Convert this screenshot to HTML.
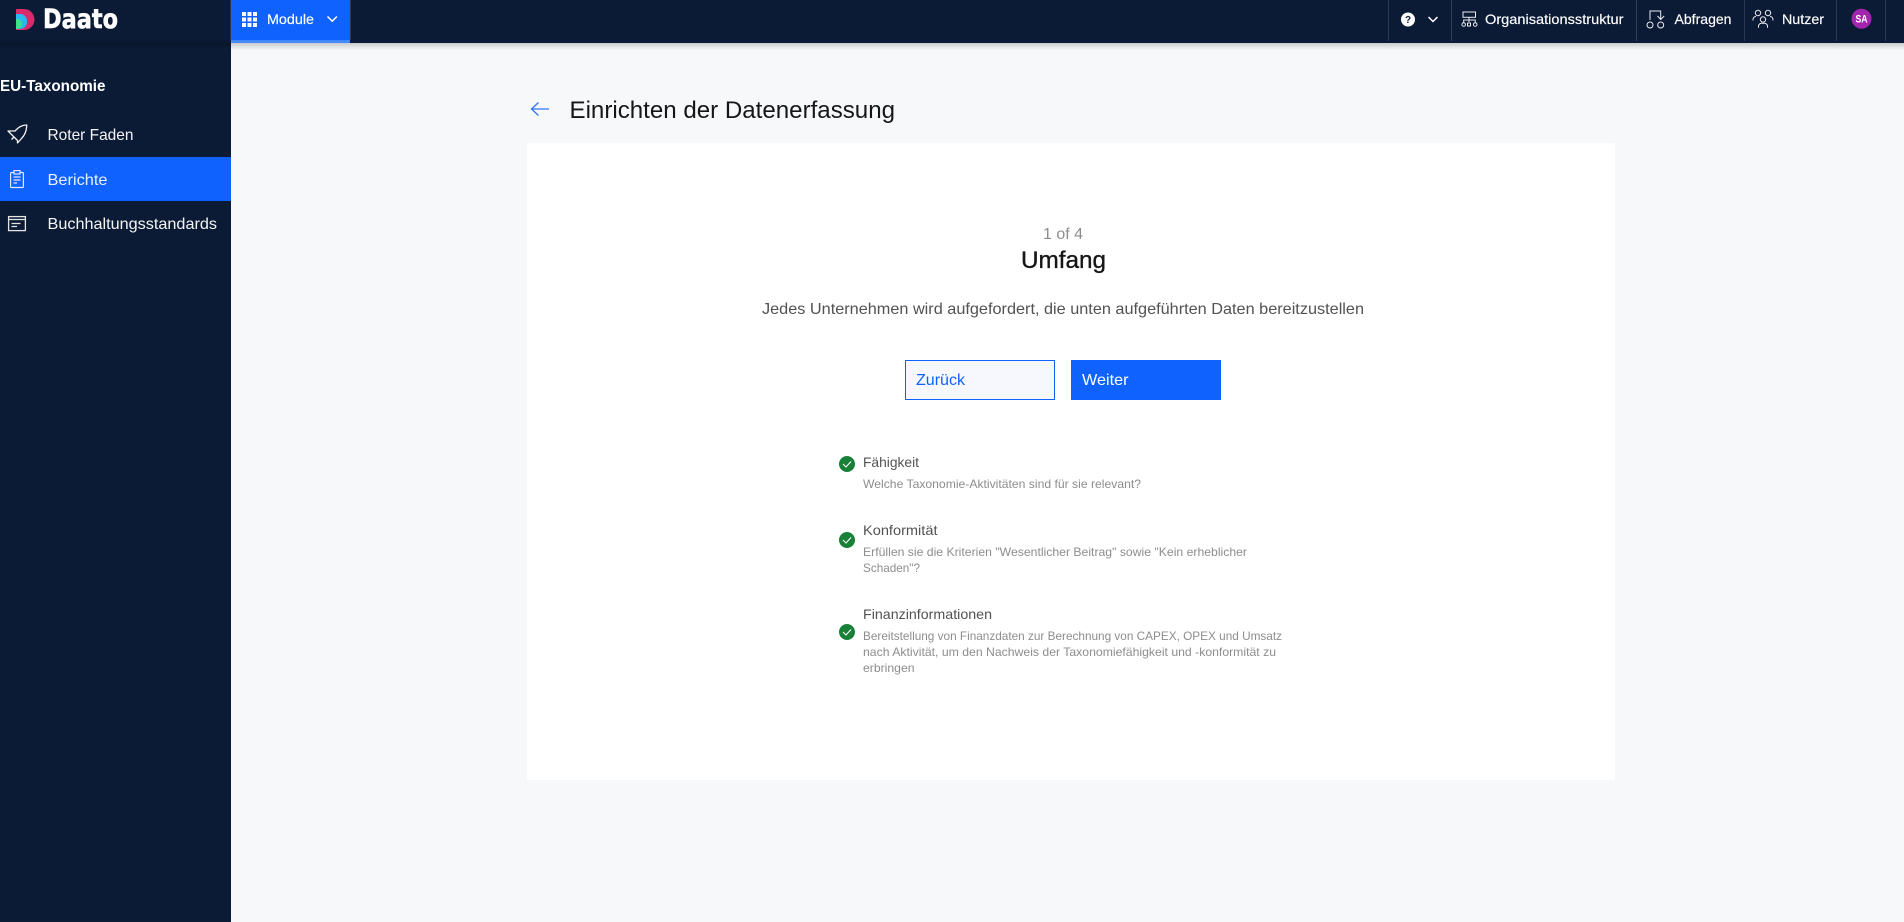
<!DOCTYPE html>
<html lang="de">
<head>
<meta charset="utf-8">
<title>Einrichten der Datenerfassung</title>
<style>
html,body{margin:0;padding:0;width:1904px;height:922px;overflow:hidden;background:#f7f8fa;font-family:"Liberation Sans",sans-serif}
.b{position:absolute}
svg{position:absolute;left:0;top:0}
text{font-family:"Liberation Sans",sans-serif;white-space:pre}
.ic{fill:none;stroke:#e8eaee;stroke-width:1}
.sep{width:1px;top:0;height:41px;background:#2a3950}
</style>
</head>
<body>
<div class="b" style="left:0;top:0;width:231px;height:922px;background:#0b1b35"></div>
<div class="b" style="left:231px;top:43px;width:1673px;height:7px;background:linear-gradient(#c9cacc,#f7f8fa)"></div>
<div class="b" style="left:0;top:43px;width:231px;height:5px;background:linear-gradient(#081428,#0b1b35)"></div>
<div class="b" style="left:0;top:0;width:1904px;height:43px;background:#0b1b35"></div>
<div class="b" style="left:0;top:40px;width:230px;height:3px;background:#0a1830"></div>
<div class="b" style="left:231px;top:0;width:119px;height:40px;background:#0f62fe"></div>
<div class="b" style="left:231px;top:40px;width:119px;height:3px;background:#4589ff"></div>
<div class="b" style="left:230px;top:0;width:1px;height:40px;background:#2a3950"></div>
<div class="b" style="left:350px;top:0;width:1px;height:40px;background:#2a3950"></div>
<div class="b sep" style="left:1388px"></div>
<div class="b sep" style="left:1451px;background:#34435a"></div>
<div class="b sep" style="left:1636px;background:#34435a"></div>
<div class="b sep" style="left:1744px"></div>
<div class="b sep" style="left:1836px"></div>
<div class="b sep" style="left:1885px"></div>
<div class="b" style="left:0;top:157px;width:231px;height:44px;background:#0f62fe"></div>
<div class="b" style="left:527px;top:143px;width:1088px;height:637px;background:#fff"></div>
<div class="b" style="left:905px;top:360px;width:148px;height:38px;background:#f6f8fd;border:1px solid #0f62fe"></div>
<div class="b" style="left:1071px;top:360px;width:150px;height:40px;background:#0f62fe"></div>

<svg width="1904" height="922" viewBox="0 0 1904 922" xmlns="http://www.w3.org/2000/svg">
  <!-- logo -->
  <path d="M16 9h8a10.500 10.500 0 0 1 0 21h-8z" fill="#d92a6b"/>
  <path d="M16 14h4a7 7 0 0 1 7 7v1a7 7 0 0 1-7 7h-4z" fill="#2ab8f5"/>
  <path d="M16 19h1a5 5.500 0 0 1 5 5.500a5 5 0 0 1-5 4.500h-1z" fill="#3ee08a"/>
  <text x="43" y="28" font-size="27" font-weight="700" fill="#fff" stroke="#fff" stroke-width=".6" textLength="75" lengthAdjust="spacingAndGlyphs" style="font-family:'DejaVu Sans',sans-serif">Daato</text>

  <!-- module -->
  <g fill="#fff">
    <rect x="242" y="12" width="4" height="4"/><rect x="247.500" y="12" width="4" height="4"/><rect x="253" y="12" width="4" height="4"/>
    <rect x="242" y="17.500" width="4" height="4"/><rect x="247.500" y="17.500" width="4" height="4"/><rect x="253" y="17.500" width="4" height="4"/>
    <rect x="242" y="23" width="4" height="4"/><rect x="247.500" y="23" width="4" height="4"/><rect x="253" y="23" width="4" height="4"/>
  </g>
  <text x="267" y="24" font-size="14" fill="#fff" stroke="#fff" stroke-width=".15" textLength="47" lengthAdjust="spacingAndGlyphs">Module</text>
  <path d="M327.500 16.500l4.700 4.700 4.700-4.700" fill="none" stroke="#fff" stroke-width="1.500"/>

  <!-- right header -->
  <circle cx="1408" cy="19.500" r="7" fill="#fff"/>
  <text x="1408" y="23" font-size="10" font-weight="700" fill="#0b1b35" text-anchor="middle">?</text>
  <path d="M1428.500 17l4.500 4.500 4.500-4.500" fill="none" stroke="#fff" stroke-width="1.500"/>
  <g class="ic">
    <rect x="1463" y="12" width="12.500" height="5.300"/>
    <path d="M1469 17.300v4.700M1463.700 22.500v-2.500h11.500v2.500"/>
    <circle cx="1463.700" cy="24.500" r="1.800"/><rect x="1467.500" y="23" width="3" height="3"/><circle cx="1475.200" cy="24.500" r="1.800"/>
  </g>
  <text x="1485" y="24" font-size="14" fill="#fff" stroke="#fff" stroke-width=".15" textLength="138.500" lengthAdjust="spacingAndGlyphs">Organisationsstruktur</text>
  <g class="ic">
    <path d="M1650 20v-9h10.700v8.700M1657.500 16l3.200 3.500 3.500-3.500"/>
    <circle cx="1650" cy="25" r="3"/><circle cx="1660.700" cy="25" r="3"/>
  </g>
  <text x="1674.500" y="24" font-size="14" fill="#fff" stroke="#fff" stroke-width=".15" textLength="57" lengthAdjust="spacingAndGlyphs">Abfragen</text>
  <g class="ic">
    <circle cx="1758" cy="13" r="2.700"/><circle cx="1768" cy="13" r="2.700"/><circle cx="1763" cy="19.500" r="2.700"/>
    <path d="M1753 20.500v-1a3 3 0 0 1 3-3M1773 20.500v-1a3 3 0 0 0-3-3M1758.500 27.700v-1.500a3 3 0 0 1 3-2.900h3a3 3 0 0 1 3 2.900v1.500"/>
  </g>
  <text x="1782" y="24" font-size="14" fill="#fff" stroke="#fff" stroke-width=".15" textLength="42" lengthAdjust="spacingAndGlyphs">Nutzer</text>
  <circle cx="1861.500" cy="18.700" r="10" fill="#a126ad"/>
  <text x="1855.500" y="22.700" font-size="11" font-weight="700" fill="#fff" textLength="12" lengthAdjust="spacingAndGlyphs">SA</text>

  <!-- sidebar -->
  <text x="0" y="91" font-size="16" font-weight="700" fill="#fff" textLength="105.500" lengthAdjust="spacingAndGlyphs">EU-Taxonomie</text>
  <g class="ic" stroke-linejoin="round" style="stroke:#f4f4f4;stroke-width:1.300">
    <path d="M26.700 125C22 125 19 127 16.500 129.500L15 131H8L13 136L17.500 140.500V143L21.500 138.500C25 135 26.700 130 26.700 125z"/>
    <path d="M11.500 139.500l2.500-2.500"/>
  </g>
  <text x="47.500" y="140" font-size="16" fill="#f4f4f4" textLength="86" lengthAdjust="spacingAndGlyphs">Roter Faden</text>
  <g class="ic" style="stroke:#dfe8ff;stroke-width:1.200">
    <rect x="10.600" y="172.500" width="12.800" height="15" rx="1"/>
    <rect x="14" y="170.600" width="6" height="3.400" fill="#0f62fe"/>
    <path d="M13.500 177h7M13.500 180h7M13.500 183h3.500"/>
  </g>
  <text x="47.500" y="185" font-size="16" fill="#e8efff" textLength="60" lengthAdjust="spacingAndGlyphs">Berichte</text>
  <g class="ic" style="stroke:#e4e4e4;stroke-width:1.300">
    <rect x="8.600" y="216.600" width="16.800" height="14"/>
    <path d="M8.600 219.500h16.800M11.500 223.500h9M11.500 226.500h5.500"/>
  </g>
  <text x="47.500" y="229" font-size="16" fill="#f4f4f4" textLength="169.500" lengthAdjust="spacingAndGlyphs">Buchhaltungsstandards</text>

  <!-- title -->
  <path d="M549 109h-17.500M538.500 102.500l-7 6.500 7 6.500" fill="none" stroke="#2f74fe" stroke-width="1.300"/>
  <text x="569.500" y="118" font-size="24" fill="#161616" textLength="325.500" lengthAdjust="spacingAndGlyphs">Einrichten der Datenerfassung</text>

  <!-- intro -->
  <text x="1043" y="239" font-size="16" fill="#8d8d8d" textLength="40" lengthAdjust="spacingAndGlyphs">1 of 4</text>
  <text x="1021" y="268" font-size="24" fill="#161616" stroke="#161616" stroke-width=".35" textLength="85" lengthAdjust="spacingAndGlyphs">Umfang</text>
  <text x="762" y="314" font-size="16" fill="#525252" textLength="602" lengthAdjust="spacingAndGlyphs">Jedes Unternehmen wird aufgefordert, die unten aufgeführten Daten bereitzustellen</text>
  <text x="916" y="385" font-size="16" fill="#0f62fe" textLength="49" lengthAdjust="spacingAndGlyphs">Zurück</text>
  <text x="1082" y="385" font-size="16" fill="#fff" textLength="46.500" lengthAdjust="spacingAndGlyphs">Weiter</text>

  <!-- list -->
  <g>
    <circle cx="847" cy="464" r="8" fill="#198038"/><path d="M843 464l3 3 5-5.500" fill="none" stroke="#fff" stroke-width="1.100"/>
    <circle cx="847" cy="540" r="8" fill="#198038"/><path d="M843 540l3 3 5-5.500" fill="none" stroke="#fff" stroke-width="1.100"/>
    <circle cx="847" cy="632" r="8" fill="#198038"/><path d="M843 632l3 3 5-5.500" fill="none" stroke="#fff" stroke-width="1.100"/>
  </g>
  <text x="863" y="467" font-size="14" fill="#525252" textLength="56" lengthAdjust="spacingAndGlyphs">Fähigkeit</text>
  <text x="863" y="488" font-size="12" fill="#8d8d8d" textLength="278" lengthAdjust="spacingAndGlyphs">Welche Taxonomie-Aktivitäten sind für sie relevant?</text>
  <text x="863" y="535" font-size="14" fill="#525252" textLength="74.500" lengthAdjust="spacingAndGlyphs">Konformität</text>
  <text x="863" y="556" font-size="12" fill="#8d8d8d" textLength="384" lengthAdjust="spacingAndGlyphs">Erfüllen sie die Kriterien "Wesentlicher Beitrag" sowie "Kein erheblicher</text>
  <text x="863" y="572" font-size="12" fill="#8d8d8d" textLength="57" lengthAdjust="spacingAndGlyphs">Schaden"?</text>
  <text x="863" y="619" font-size="14" fill="#525252" textLength="129" lengthAdjust="spacingAndGlyphs">Finanzinformationen</text>
  <text x="863" y="640" font-size="12" fill="#8d8d8d" textLength="419" lengthAdjust="spacingAndGlyphs">Bereitstellung von Finanzdaten zur Berechnung von CAPEX, OPEX und Umsatz</text>
  <text x="863" y="656" font-size="12" fill="#8d8d8d" textLength="413" lengthAdjust="spacingAndGlyphs">nach Aktivität, um den Nachweis der Taxonomiefähigkeit und -konformität zu</text>
  <text x="863" y="672" font-size="12" fill="#8d8d8d" textLength="51.500" lengthAdjust="spacingAndGlyphs">erbringen</text>
</svg>
</body>
</html>
